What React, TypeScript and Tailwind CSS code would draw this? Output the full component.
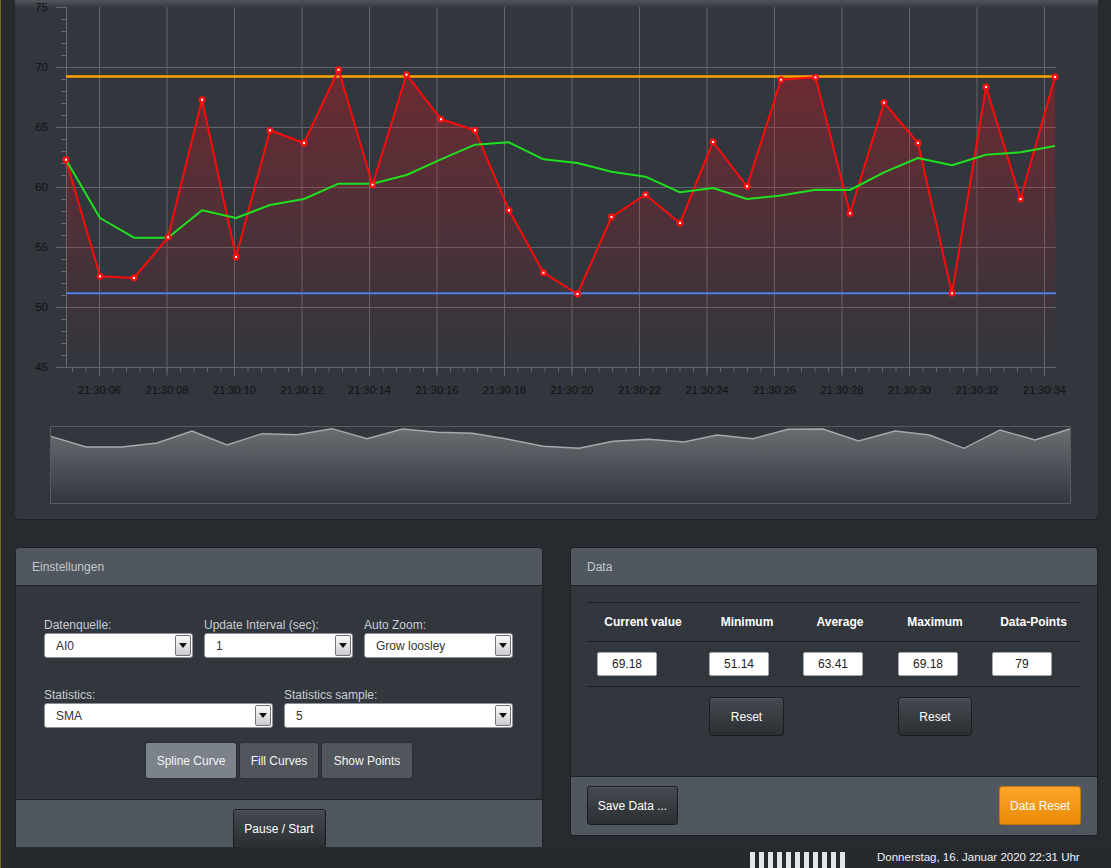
import React from "react";

const XS = [66, 100, 134, 168, 202, 236, 270, 304, 338.5, 372.5, 406.5, 441, 475, 509, 543.5, 577.5, 611.5, 645.5, 680, 713, 747, 781, 815.5, 850, 884, 918, 952, 986, 1020.5, 1055];
const RED = [159.7, 276.3, 278, 237.3, 99.7, 257, 130.3, 143, 69.7, 184.7, 74.7, 119.3, 130.3, 210.3, 272.7, 294, 217, 194.7, 223, 142, 186.3, 79.7, 77.3, 213.3, 102.7, 143, 293.3, 87, 199, 77];
const GREEN = [159.7, 218, 237.7, 237.7, 210.3, 218, 205, 199, 183.7, 183.7, 175, 159.3, 144.7, 142.3, 159.3, 163, 171.7, 176.7, 192.3, 188, 199, 195.5, 189.7, 190, 172.3, 158, 165.3, 154.7, 152.3, 146];
const NX = [51, 86, 122, 157, 192, 227, 262, 297, 332, 367, 402.5, 437.5, 472.5, 507, 543, 579, 613, 648.5, 684, 717, 753, 788, 823, 858.5, 895, 929.5, 964, 1000, 1035, 1070];
const NY = [436.3, 447, 447, 443, 431, 445, 433.7, 434.7, 428.7, 438.7, 429, 432.3, 433.3, 439, 446.3, 448.3, 441.3, 439.3, 442, 435, 438.7, 429.3, 429, 441, 431, 435, 448.3, 430, 440, 429];

const pts = (ys: number[]) => XS.map((x, i) => `${x},${ys[i]}`).join(" ");

function Chart() {
  const yLabels = [75, 70, 65, 60, 55, 50, 45];
  const majorX = Array.from({ length: 15 }, (_, k) => 99.5 + k * 67.5);
  const minorX = Array.from({ length: 73 }, (_, k) => 72.5 + k * 13.5).filter((x) => x <= 1050);
  const minorY = Array.from({ length: 31 }, (_, k) => 7 + k * 12);
  const navPts = NX.map((x, i) => `${x},${NY[i]}`).join(" ");
  return (
    <svg width="1083" height="519" viewBox="15 0 1083 519" className="block">
      <defs>
        <linearGradient id="topband" x1="0" y1="0" x2="0" y2="1">
          <stop offset="0" stopColor="#52565c" />
          <stop offset="1" stopColor="#33373e" />
        </linearGradient>
        <linearGradient id="redfill" gradientUnits="userSpaceOnUse" x1="0" y1="7" x2="0" y2="367">
          <stop offset="0" stopColor="rgb(220,20,30)" stopOpacity="0.42" />
          <stop offset="1" stopColor="rgb(220,20,30)" stopOpacity="0" />
        </linearGradient>
        <linearGradient id="navfill" gradientUnits="userSpaceOnUse" x1="0" y1="428" x2="0" y2="503">
          <stop offset="0" stopColor="#6a6d72" />
          <stop offset="1" stopColor="#33373e" />
        </linearGradient>
      </defs>
      <rect x="15" y="0" width="1083" height="8" fill="url(#topband)" />
      {[67, 127, 187, 247, 307].map((y) => (
        <line key={y} x1="66" x2="1056" y1={y + 0.5} y2={y + 0.5} stroke="#62666b" strokeWidth="1" />
      ))}
      {majorX.map((x) => (
        <line key={x} x1={x} x2={x} y1="7" y2="376" stroke="#62666b" strokeWidth="1" />
      ))}
      {minorX.map((x) => (
        <line key={"m" + x} x1={x} x2={x} y1="367" y2="372" stroke="#62666b" strokeWidth="1" />
      ))}
      {minorY.map((y) => (
        <line key={"y" + y} x1={(y - 7) % 60 === 0 ? 56 : 61} x2="66" y1={y + 0.5} y2={y + 0.5} stroke="#62666b" strokeWidth="1" />
      ))}
      <line x1="66.5" x2="66.5" y1="7" y2="367" stroke="#686c71" strokeWidth="1" />
      <line x1="56" x2="1056" y1="367.5" y2="367.5" stroke="#62666b" strokeWidth="1" />
      {yLabels.map((v, i) => (
        <text key={v} x="48" y={7 + i * 60 + 4} textAnchor="end" fontSize="11.5" fill="#101113">
          {v}
        </text>
      ))}
      {majorX.map((x, k) => (
        <text key={"t" + k} x={x} y="394" textAnchor="middle" fontSize="11" fill="#101113">
          {`21:30:${String(6 + 2 * k).padStart(2, "0")}`}
        </text>
      ))}
      <polygon points={`66,367 ${pts(RED)} 1055,367`} fill="url(#redfill)" />
      <line x1="66" x2="1056" y1="76.5" y2="76.5" stroke="#ffa200" strokeWidth="2.5" />
      <line x1="66" x2="1056" y1="293.3" y2="293.3" stroke="#4d7fe6" strokeWidth="2" />
      <polyline points={pts(RED)} fill="none" stroke="#ff0a0a" strokeWidth="2" strokeLinejoin="round" />
      <polyline points={pts(GREEN)} fill="none" stroke="#1fe01f" strokeWidth="2" strokeLinejoin="round" />
      {XS.map((x, i) => (
        <g key={"p" + i}>
          <circle cx={x} cy={RED[i]} r="3.4" fill="#ff1010" />
          <rect x={x - 1} y={RED[i] - 1} width="2" height="2" fill="#ffffff" />
        </g>
      ))}
      <polygon points={`51,503 ${navPts} 1070,503`} fill="url(#navfill)" />
      <polyline points={navPts} fill="none" stroke="#a6a9ac" strokeWidth="1.4" />
      <rect x="50.5" y="426.5" width="1020" height="77" fill="none" stroke="#585c61" strokeWidth="1" />
    </svg>
  );
}

function Select({ value, className }: { value: string; className: string }) {
  return (
    <div className={"h-[25px] bg-white rounded-[3px] border border-[#8e9298] flex items-stretch " + className}>
      <div className="flex-1 flex items-center pl-[11px] text-[12px] text-[#333] leading-none">{value}</div>
      <div className="w-[16px] my-[1px] mr-[1px] rounded-[2px] border border-[#6f7378] bg-[linear-gradient(#fbfbfb,#c9cbcd)] flex items-center justify-center">
        <svg width="8" height="5" viewBox="0 0 8 5">
          <polygon points="0,0 8,0 4,5" fill="#111" />
        </svg>
      </div>
    </div>
  );
}

const darkBtn =
  "h-[39px] rounded-[3px] border border-[#1a1c1f] bg-[linear-gradient(#454a50,#2b2f34)] text-white text-[12px] flex items-center justify-center shadow-[inset_0_1px_0_rgba(255,255,255,0.06)]";

const label = "text-[12px] text-[#c9cdd1] leading-[16px]";

export default function App() {
  return (
    <div className="w-[1111px] h-[868px] overflow-hidden bg-[#272a2e] flex font-['Liberation_Sans',Arial,sans-serif]">
      <div className="w-px h-full bg-[#6f7026] shrink-0" />
      <div className="flex-1 flex flex-col min-w-0">
        <div className="flex-1 min-h-0 overflow-hidden pl-[14px] pr-[13px]">
          <div className="w-[1083px] h-[519px] bg-[#32363d] rounded-b-[4px] shadow-[0_1px_0_#1d1f22] overflow-hidden">
            <Chart />
          </div>
          <div className="mt-[28px] flex gap-[27px]">
            <div className="w-[528px] rounded-t-[4px] border border-[#1e2024] bg-[#32363d] overflow-hidden">
              <div className="h-[38px] bg-[#50575e] border-b border-[#1e2024] flex items-center pl-[16px] text-[12px] text-[#c3c7cb]">
                Einstellungen
              </div>
              <div className="h-[213px] px-[28px] pt-[31px]">
                <div className="grid grid-cols-3 gap-x-[11px] w-[469px]">
                  <div>
                    <div className={label}>Datenquelle:</div>
                    <Select value="AI0" className="w-[149px]" />
                  </div>
                  <div>
                    <div className={label}>Update Interval (sec):</div>
                    <Select value="1" className="w-[149px]" />
                  </div>
                  <div>
                    <div className={label}>Auto Zoom:</div>
                    <Select value="Grow loosley" className="w-[149px]" />
                  </div>
                </div>
                <div className="grid grid-cols-2 gap-x-[11px] w-[469px] mt-[29px]">
                  <div>
                    <div className={label}>Statistics:</div>
                    <Select value="SMA" className="w-[229px]" />
                  </div>
                  <div>
                    <div className={label}>Statistics sample:</div>
                    <Select value="5" className="w-[229px]" />
                  </div>
                </div>
                <div className="flex justify-center gap-[2px] mt-[14px]">
                  <div className="w-[92px] h-[37px] rounded-[3px] border border-[#2b2e32] bg-[#7c8289] text-[#f4f4f4] text-[12px] flex items-center justify-center">
                    Spline Curve
                  </div>
                  <div className="w-[80px] h-[37px] rounded-[3px] border border-[#2b2e32] bg-[#50565c] text-[#f4f4f4] text-[12px] flex items-center justify-center">
                    Fill Curves
                  </div>
                  <div className="w-[92px] h-[37px] rounded-[3px] border border-[#2b2e32] bg-[#50565c] text-[#f4f4f4] text-[12px] flex items-center justify-center">
                    Show Points
                  </div>
                </div>
              </div>
              <div className="h-[70px] bg-[#50575e] border-t border-[#1e2024] flex justify-center pt-[9px]">
                <div className={darkBtn + " w-[93px]"}>Pause / Start</div>
              </div>
            </div>
            <div className="w-[528px] h-[289px] rounded-[4px] border border-[#1e2024] bg-[#32363d] overflow-hidden flex flex-col">
              <div className="h-[38px] shrink-0 bg-[#50575e] border-b border-[#1e2024] flex items-center pl-[16px] text-[12px] text-[#c3c7cb]">
                Data
              </div>
              <div className="h-[190px] shrink-0 px-[16px] pt-[16px]">
                <div className="border-t border-[#1b1d20]">
                  <div className="grid grid-cols-[112px_96px_90px_100px_97px] h-[39px] items-center border-b border-[#1b1d20] text-white font-bold text-[12px] text-center">
                    <div>Current value</div>
                    <div>Minimum</div>
                    <div>Average</div>
                    <div>Maximum</div>
                    <div>Data-Points</div>
                  </div>
                  <div className="grid grid-cols-[112px_96px_90px_100px_97px] h-[45px] items-center border-b border-[#1b1d20]">
                    {[
                      ["69.18", "ml-[10px]"],
                      ["51.14", "ml-[10px]"],
                      ["63.41", "ml-[8px]"],
                      ["69.18", "ml-[13px]"],
                      ["79", "ml-[7px]"],
                    ].map(([v, m], i) => (
                      <div key={i}>
                        <div className={"w-[60px] h-[24px] bg-white rounded-[2px] border border-[#a3a7ab] text-center text-[12px] leading-[22px] text-[#222] " + m}>
                          {v}
                        </div>
                      </div>
                    ))}
                  </div>
                  <div className="grid grid-cols-[112px_96px_90px_100px_97px] mt-[10px]">
                    <div className="col-start-2 ml-[10px]">
                      <div className={darkBtn + " w-[75px]"}>Reset</div>
                    </div>
                    <div className="col-start-4 ml-[13px]">
                      <div className={darkBtn + " w-[74px]"}>Reset</div>
                    </div>
                  </div>
                </div>
              </div>
              <div className="flex-1 bg-[#50575e] border-t border-[#1e2024] flex justify-between items-start px-[16px] pt-[9px]">
                <div className={darkBtn + " w-[91px]"}>Save Data ...</div>
                <div className="w-[82px] h-[39px] rounded-[3px] border border-[#c47508] bg-[linear-gradient(#fba62a,#ec8906)] text-white text-[12px] flex items-center justify-center">
                  Data Reset
                </div>
              </div>
            </div>
          </div>
        </div>
        <div className="h-[21px] shrink-0 bg-[#26292d] flex items-end">
          <div className="ml-[749px] flex gap-[4px] h-[16px]">
            {Array.from({ length: 11 }).map((_, i) => (
              <div key={i} className="w-[5px] h-full bg-[#e4e5e6]" />
            ))}
          </div>
          <div className="ml-[32px] self-center text-[11.5px] text-[#f2f2f2] leading-none whitespace-nowrap">
            Donnerstag, 16. Januar 2020 22:31 Uhr
          </div>
        </div>
      </div>
    </div>
  );
}
